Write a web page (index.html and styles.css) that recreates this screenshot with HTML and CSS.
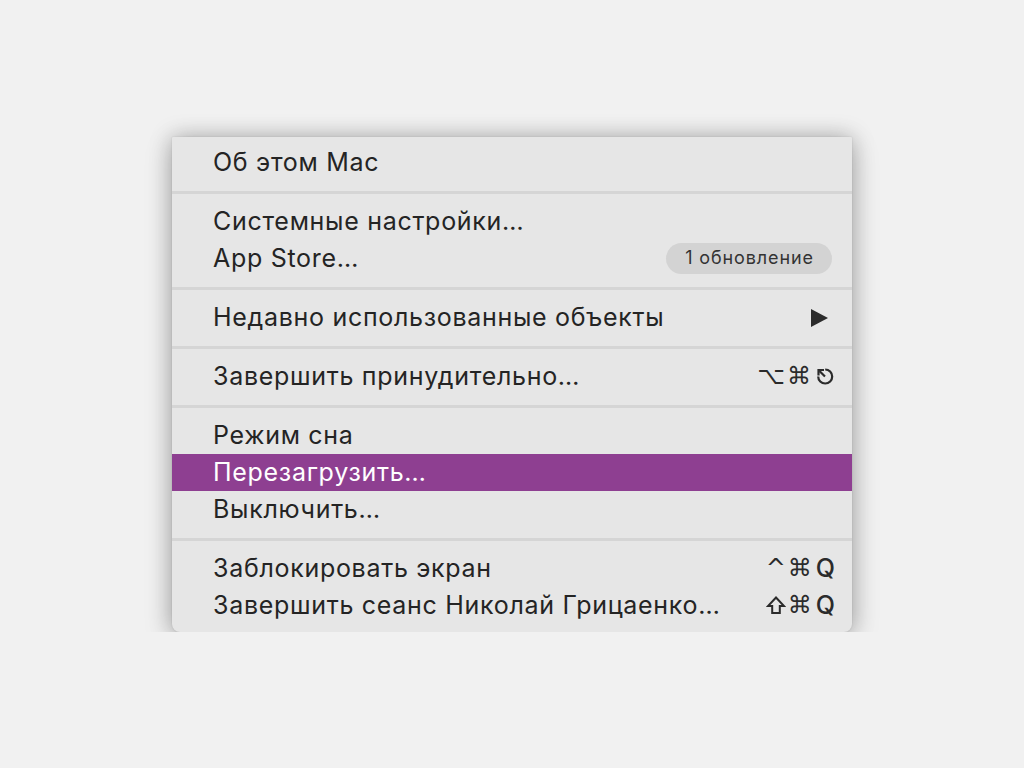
FILE: index.html
```html
<!DOCTYPE html>
<html lang="ru">
<head>
<meta charset="utf-8">
<title>Apple menu</title>
<link rel="stylesheet" href="styles.css">
</head>
<body>
<div class="menu">
  <div class="item"><span class="label">Об этом Mac</span></div>
  <div class="sep"></div>
  <div class="item"><span class="label">Системные настройки…</span></div>
  <div class="item"><span class="label">App Store…</span><span class="badge">1 обновление</span></div>
  <div class="sep"></div>
  <div class="item"><span class="label">Недавно использованные объекты</span><span class="arrow"></span></div>
  <div class="sep"></div>
  <div class="item"><span class="label">Завершить принудительно…</span>
    <span class="keys"><span class="sym">⌥⌘</span><svg class="esc" viewBox="0 0 20 20" width="20" height="20"><path d="M3.2 10.5 A7 7 0 1 0 10.2 3.5" fill="none" stroke="currentColor" stroke-width="2.2"/><path d="M10 10.5 L4.5 5" fill="none" stroke="currentColor" stroke-width="2.2"/><path d="M3.5 9.5 L3.5 4 L9 4" fill="none" stroke="currentColor" stroke-width="2.2"/></svg></span></div>
  <div class="sep"></div>
  <div class="item"><span class="label">Режим сна</span></div>
  <div class="item active"><span class="label">Перезагрузить…</span></div>
  <div class="item"><span class="label">Выключить…</span></div>
  <div class="sep"></div>
  <div class="item"><span class="label">Заблокировать экран</span><span class="keys"><span class="sym">^⌘</span><span class="q">Q</span></span></div>
  <div class="item"><span class="label">Завершить сеанс Николай Грицаенко…</span><span class="keys"><svg class="shift" viewBox="0 0 20 20" width="20" height="20"><path d="M10 2.5 L18 11 L13.8 11 L13.8 18 L6.2 18 L6.2 11 L2 11 Z" fill="none" stroke="currentColor" stroke-width="2" stroke-linejoin="miter"/></svg><span class="sym">⌘</span><span class="q">Q</span></span></div>
</div>
</body>
</html>
```
FILE: styles.css
```css
html, body {
  margin: 0;
  padding: 0;
  background: #f1f1f1;
}
body {
  font-family: "Inter", "DejaVu Sans", sans-serif;
  color: #242424;
}
.menu {
  width: 680px;
  height: 495px;
  box-sizing: border-box;
  margin: 137px 0 0 172px;
  padding: 7px 0 8px;
  background: #e6e6e6;
  border-radius: 1px 1px 8px 8px;
  box-shadow: 0 0 22px rgba(0, 0, 0, 0.26), 0 8px 30px rgba(0, 0, 0, 0.16), 0 0 2px rgba(0, 0, 0, 0.12);
  display: flex;
  flex-direction: column;
}
.item {
  height: 37px;
  flex: none;
  display: flex;
  align-items: center;
  justify-content: space-between;
  padding: 0 17px 1px 41px;
  box-sizing: border-box;
  font-size: 25px;
  letter-spacing: 0.7px;
}
.item.active {
  background: #8e3f91;
  color: #ffffff;
}
.sep {
  height: 22px;
  flex: none;
  display: flex;
  align-items: center;
}
.sep::before {
  content: "";
  display: block;
  width: 100%;
  height: 3px;
  background: #d5d5d5;
}
.badge {
  height: 31px;
  line-height: 30px;
  padding: 0 18px 0 19px;
  margin: 0 3px 0 0;
  border-radius: 16px;
  background: #d3d3d3;
  font-size: 18px;
  letter-spacing: 0.9px;
  color: #333333;
}
.arrow {
  width: 0;
  height: 0;
  margin: 2px 7px 0 0;
  border-top: 9px solid transparent;
  border-bottom: 9px solid transparent;
  border-left: 17px solid #2b2b2b;
}
.keys {
  display: flex;
  align-items: center;
  gap: 2px;
  color: #2b2b2b;
  letter-spacing: 2px;
}
.sym {
  font-family: "DejaVu Sans", sans-serif;
  font-size: 24px;
}
.q {
  font-family: "Inter", sans-serif;
  font-size: 25px;
  font-weight: 500;
  letter-spacing: 0;
}
.esc, .shift {
  display: block;
  color: #2b2b2b;
}
```
